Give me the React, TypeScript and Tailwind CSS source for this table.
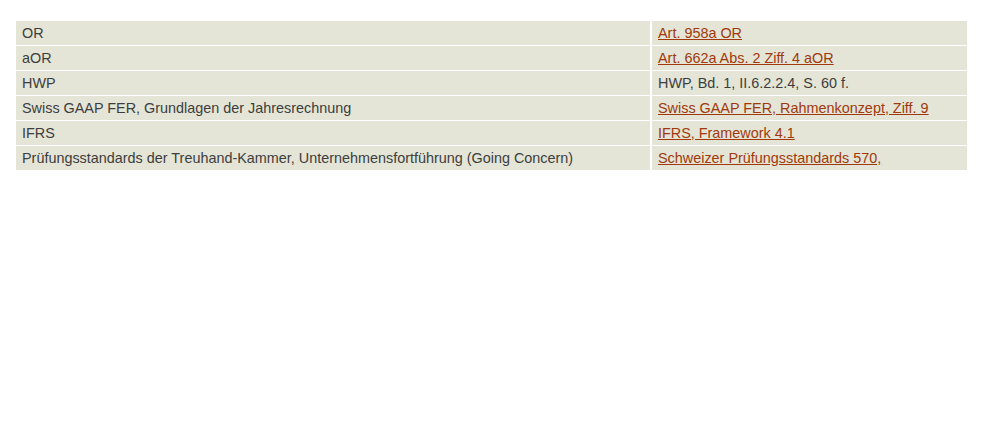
import React from "react";

const rows: [string, string, boolean][] = [
  ["OR", "Art. 958a OR", true],
  ["aOR", "Art. 662a Abs. 2 Ziff. 4 aOR", true],
  ["HWP", "HWP, Bd. 1, II.6.2.2.4, S. 60 f.", false],
  ["Swiss GAAP FER, Grundlagen der Jahresrechnung", "Swiss GAAP FER, Rahmenkonzept, Ziff. 9", true],
  ["IFRS", "IFRS, Framework 4.1", true],
  ["Prüfungsstandards der Treuhand-Kammer, Unternehmensfortführung (Going Concern)", "Schweizer Prüfungsstandards 570,", true],
];

export default function App() {
  return (
    <div className="bg-white w-[983px] h-[441px] pt-[21px] pl-[16px]" style={{ fontFamily: '"Liberation Sans", Arial, sans-serif' }}>
      <div className="grid grid-cols-[634px_315px] gap-x-[2px] gap-y-px w-[951px] text-[14.4px] text-[#3d3d3d]">
        {rows.map(([a, b, link], i) => (
          <React.Fragment key={i}>
            <div className="bg-[#e4e5d6] h-[24px] leading-[24px] pl-[6px] whitespace-nowrap">{a}</div>
            <div className="bg-[#e4e5d6] h-[24px] leading-[24px] pl-[6px] whitespace-nowrap">
              {link ? <a href="#" className="text-[#a0390c] underline">{b}</a> : b}
            </div>
          </React.Fragment>
        ))}
      </div>
    </div>
  );
}
